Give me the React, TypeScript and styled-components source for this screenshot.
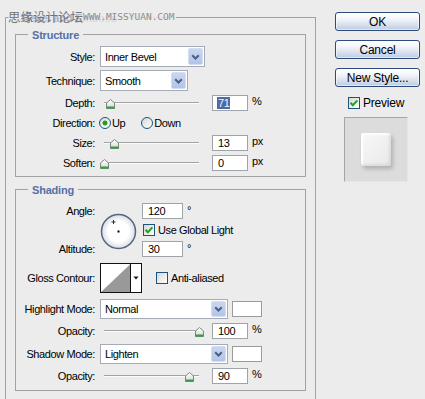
import React from "react";
import styled, { createGlobalStyle } from "styled-components";

const GlobalStyle = createGlobalStyle`
  html, body {
    margin: 0;
    padding: 0;
    background: #ececec;
  }
  body {
    font-family: "Liberation Sans", Arial, sans-serif;
    font-size: 11px;
    color: #000;
  }
`;

const Dialog = styled.div`
  position: relative;
  width: 425px;
  height: 399px;
  overflow: hidden;
  box-sizing: border-box;
  padding: 12px 5px 0 5px;
  display: flex;
  align-items: flex-start;
  background: #ececec;
  letter-spacing: -0.4px;
`;

const Group = styled.div<{ $mt?: number; $mx?: number }>`
  border: 1px solid #a2a2a2;
  margin: ${(p) => p.$mt ?? 0}px ${(p) => p.$mx ?? 0}px 0;
`;

const Outer = styled(Group)`
  width: 311px;
  box-sizing: border-box;
  padding-bottom: 40px;
`;

const Legend = styled.div`
  width: fit-content;
  margin: -7px 0 0 12px;
  padding: 0 4px;
  line-height: 14px;
  font-weight: bold;
  font-size: 11px;
  color: #5670a6;
  background: #ececec;
  letter-spacing: -0.2px;
`;

const Body = styled.div<{ $pt: number; $pb: number }>`
  display: flex;
  flex-direction: column;
  padding: ${(p) => p.$pt}px 0 ${(p) => p.$pb}px;
`;

const Row = styled.div<{ $h: number; $mt?: number }>`
  display: grid;
  grid-template-columns: 79px 1fr;
  column-gap: 5px;
  align-items: center;
  height: ${(p) => p.$h}px;
  margin-top: ${(p) => p.$mt ?? 0}px;
`;

const Label = styled.span`
  text-align: right;
  white-space: nowrap;
`;

const Controls = styled.div`
  display: flex;
  align-items: center;
  height: 100%;
`;

const Select = styled.div<{ $w: number }>`
  width: ${(p) => p.$w}px;
  height: 100%;
  box-sizing: border-box;
  border: 1px solid #a5acb5;
  background: #fff;
  display: flex;
  align-items: center;
  justify-content: space-between;
  padding-left: 4px;
`;

const DropButton = styled.span`
  width: 15px;
  height: calc(100% - 2px);
  margin-right: 1px;
  box-sizing: border-box;
  border: 1px solid #d3def3;
  border-radius: 2px;
  background: linear-gradient(#c9d6f0, #b3c4e6);
  display: flex;
  align-items: center;
  justify-content: center;
`;

const Swatch = styled.div`
  width: 30px;
  height: 16px;
  box-sizing: border-box;
  margin-left: 4px;
  border: 1px solid #9a9a9a;
  background: #fff;
`;

const SliderBox = styled.div`
  position: relative;
  width: 103px;
  height: 100%;
  margin-right: 9px;
  display: flex;
  align-items: center;
`;

const Track = styled.div`
  flex: 1;
  margin: 0 4px;
  height: 0;
  border-top: 1px solid #a3a3a3;
  border-bottom: 1px solid #fbfbfb;
`;

const ThumbIcon = styled.svg`
  position: absolute;
  top: 50%;
  margin-top: -4px;
  margin-left: -4.5px;
`;

const Field = styled.div<{ $w?: number }>`
  width: ${(p) => p.$w ?? 36}px;
  height: 16px;
  box-sizing: border-box;
  border: 1px solid #9fa4ab;
  background: #fff;
  padding-left: 5px;
  line-height: 14px;
  white-space: nowrap;
`;

const Selected = styled.span`
  background: #4f6aa5;
  color: #f4f4f4;
  padding: 0 1px;
  margin-left: -1px;
`;

const Unit = styled.span`
  align-self: flex-start;
  margin: 1px 0 0 4px;
  line-height: 12px;
`;

const RadioItem = styled.span<{ $ml?: number }>`
  display: inline-flex;
  align-items: center;
  gap: 1px;
  margin-left: ${(p) => p.$ml ?? -1}px;
`;

const RadioDot = styled.span<{ $on?: boolean }>`
  width: 12px;
  height: 12px;
  box-sizing: border-box;
  border-radius: 50%;
  border: 1px solid #1c5180;
  background: ${(p) =>
    p.$on
      ? "radial-gradient(circle, #21a121 0 2.2px, transparent 2.8px), linear-gradient(135deg, #d8d8d2, #fff)"
      : "linear-gradient(135deg, #d8d8d2, #fff)"};
`;

const CheckBox = styled.span<{ $ml?: number }>`
  width: 12px;
  height: 12px;
  flex: none;
  box-sizing: border-box;
  border: 1px solid #1c5180;
  background: linear-gradient(135deg, #d8d8d2, #fff);
  display: inline-flex;
  align-items: center;
  justify-content: center;
  margin-left: ${(p) => p.$ml ?? 0}px;
`;

const CheckLabel = styled.span`
  margin-left: 3px;
  white-space: nowrap;
`;

const AngleBlock = styled.div`
  display: grid;
  grid-template-columns: 79px 37px auto;
  grid-template-rows: 16px 22px 16px;
  column-gap: 5px;
  align-items: center;
`;

const AngleLabel = styled(Label)<{ $row: number }>`
  grid-column: 1;
  grid-row: ${(p) => p.$row};
`;

const Dial = styled.svg`
  grid-column: 2;
  grid-row: 1 / 4;
  align-self: center;
  margin-top: 2px;
`;

const AngleCell = styled.div<{ $row: number }>`
  grid-column: 3;
  grid-row: ${(p) => p.$row};
  display: flex;
  align-items: center;
  height: 100%;
`;

const Contour = styled.svg`
  display: block;
`;

const Side = styled.div`
  width: 85px;
  margin-left: 19px;
  display: flex;
  flex-direction: column;
  gap: 9px;
`;

const Button = styled.button`
  width: 85px;
  height: 19px;
  padding: 0;
  box-sizing: border-box;
  border: 1px solid #2d4a7c;
  border-radius: 3px;
  background: linear-gradient(#ffffff 0%, #f2f5fa 35%, #d3dcec 75%, #bccadf 100%);
  box-shadow: inset 0 0 0 1px rgba(255, 255, 255, 0.55);
  font-family: "Liberation Sans", Arial, sans-serif;
  font-size: 12px;
  letter-spacing: -0.2px;
  color: #000;
  line-height: 16px;
`;

const PreviewRow = styled.div`
  display: flex;
  align-items: center;
  margin: 1px 0 0 13px;
  height: 12px;
  font-size: 12px;
  letter-spacing: -0.2px;
`;

const PreviewBox = styled.div`
  width: 64px;
  height: 65px;
  margin: -1px 0 0 9px;
  box-sizing: border-box;
  border-top: 1px solid #a6a6a6;
  border-left: 1px solid #a6a6a6;
  border-right: 1px solid #e6e6e6;
  border-bottom: 1px solid #e6e6e6;
  background: #dcdcdc;
  display: flex;
  align-items: center;
  justify-content: center;
`;

const Bevel = styled.div`
  width: 30px;
  height: 33px;
  border-radius: 3px;
  background: linear-gradient(135deg, #f8f8f8, #e9e9e9);
  box-shadow: 2px 3px 4px rgba(0, 0, 0, 0.2), inset -2px -2px 3px rgba(0, 0, 0, 0.08),
    inset 2px 2px 2px #fff;
`;

const Watermark = styled.div`
  position: absolute;
  top: 8px;
  left: 8px;
  height: 17px;
  display: flex;
  align-items: center;
  letter-spacing: 0;
`;

const WaterCn = styled.span`
  font-family: "Noto Sans CJK SC", sans-serif;
  font-size: 12.5px;
  line-height: 17px;
  color: #737373;
  background: rgba(236, 236, 236, 0.55);
`;

const WaterEn = styled.span`
  font-family: "DejaVu Sans Mono", monospace;
  font-size: 9.5px;
  line-height: 17px;
  color: #8d8d8d;
  background: rgba(236, 236, 236, 0.85);
  padding-right: 1px;
`;

const Chevron = () => (
  <svg width="9" height="6" viewBox="0 0 9 6">
    <path d="M1.2 1.2 L4.5 4.5 L7.8 1.2" fill="none" stroke="#4a5f86" strokeWidth="2" />
  </svg>
);

const Tick = () => (
  <svg width="10" height="10" viewBox="0 0 10 10">
    <path d="M1.5 4.8 L3.8 7.2 L8.4 2.4" fill="none" stroke="#21a121" strokeWidth="2" />
  </svg>
);

const Dropdown = ({ w, text }: { w: number; text: string }) => (
  <Select $w={w}>
    <span>{text}</span>
    <DropButton>
      <Chevron />
    </DropButton>
  </Select>
);

const Slider = ({ pct }: { pct: number }) => (
  <SliderBox>
    <Track />
    <ThumbIcon width="9" height="10" viewBox="0 0 9 10" style={{ left: 4 + pct * 95 }}>
      <defs>
        <linearGradient id="tg" x1="0" y1="0" x2="0" y2="1">
          <stop offset="0" stopColor="#ffffff" />
          <stop offset="1" stopColor="#d4d8d4" />
        </linearGradient>
      </defs>
      <path d="M0.5 4 L4.5 0.5 L8.5 4 V9.5 H0.5 Z" fill="url(#tg)" stroke="#7d8a80" />
      <rect x="0.5" y="7.5" width="8" height="2" fill="#3b9a45" />
    </ThumbIcon>
  </SliderBox>
);

const SliderRow = ({ label, pct, value, unit, mt, sel }: { label: string; pct: number; value: string; unit: string; mt?: number; sel?: boolean }) => (
  <Row $h={17} $mt={mt}>
    <Label>{label}</Label>
    <Controls>
      <Slider pct={pct} />
      <Field>{sel ? <Selected>{value}</Selected> : value}</Field>
      <Unit>{unit}</Unit>
    </Controls>
  </Row>
);

export default function App() {
  return (
    <>
      <GlobalStyle />
      <Dialog>
        <Outer $mt={5}>
          <Legend>Bevel and Emboss</Legend>
          <Group $mt={9} $mx={9}>
            <Legend>Structure</Legend>
            <Body $pt={4} $pb={5}>
              <Row $h={21}>
                <Label>Style:</Label>
                <Controls>
                  <Dropdown w={105} text="Inner Bevel" />
                </Controls>
              </Row>
              <Row $h={21} $mt={3}>
                <Label>Technique:</Label>
                <Controls>
                  <Dropdown w={88} text="Smooth" />
                </Controls>
              </Row>
              <SliderRow label="Depth:" pct={0.071} value="71" unit="%" mt={3} sel />
              <Row $h={17} $mt={3}>
                <Label>Direction:</Label>
                <Controls>
                  <RadioItem>
                    <RadioDot $on />
                    <span>Up</span>
                  </RadioItem>
                  <RadioItem $ml={16}>
                    <RadioDot />
                    <span>Down</span>
                  </RadioItem>
                </Controls>
              </Row>
              <SliderRow label="Size:" pct={0.11} value="13" unit="px" mt={3} />
              <SliderRow label="Soften:" pct={0} value="0" unit="px" mt={3} />
            </Body>
          </Group>

          <Group $mt={12} $mx={9}>
            <Legend>Shading</Legend>
            <Body $pt={6} $pb={6}>
              <AngleBlock>
                <AngleLabel $row={1}>Angle:</AngleLabel>
                <AngleLabel $row={3}>Altitude:</AngleLabel>
                <Dial width="37" height="37" viewBox="0 0 37 37">
                  <defs>
                    <radialGradient id="dg" cx="0.5" cy="0.5" r="0.5">
                      <stop offset="0.6" stopColor="#ffffff" />
                      <stop offset="1" stopColor="#d7dde6" />
                    </radialGradient>
                  </defs>
                  <circle cx="18.5" cy="18.5" r="17" fill="url(#dg)" stroke="#56657a" strokeWidth="1.5" />
                  <path d="M13.5 7 V11 M11.5 9 H15.5" stroke="#333" strokeWidth="1" />
                  <rect x="17.5" y="17.5" width="2" height="2" fill="#000" />
                </Dial>
                <AngleCell $row={1}>
                  <Field $w={41}>120</Field>
                  <Unit>°</Unit>
                </AngleCell>
                <AngleCell $row={2}>
                  <CheckBox $ml={1}>
                    <Tick />
                  </CheckBox>
                  <CheckLabel>Use Global Light</CheckLabel>
                </AngleCell>
                <AngleCell $row={3}>
                  <Field $w={41}>30</Field>
                  <Unit>°</Unit>
                </AngleCell>
              </AngleBlock>

              <Row $h={30} $mt={6}>
                <Label>Gloss Contour:</Label>
                <Controls>
                  <Contour width="42" height="30" viewBox="0 0 42 30">
                    <rect x="0.5" y="0.5" width="41" height="29" fill="#fff" stroke="#111" />
                    <polygon points="1,29 30.5,1 30.5,29" fill="#999" />
                    <line x1="30.5" y1="0" x2="30.5" y2="30" stroke="#111" />
                    <polygon points="33.5,13.5 38.5,13.5 36,16.5" fill="#111" />
                  </Contour>
                  <CheckBox $ml={14} />
                  <CheckLabel>Anti-aliased</CheckLabel>
                </Controls>
              </Row>

              <Row $h={20} $mt={6}>
                <Label>Highlight Mode:</Label>
                <Controls>
                  <Dropdown w={128} text="Normal" />
                  <Swatch />
                </Controls>
              </Row>
              <SliderRow label="Opacity:" pct={1} value="100" unit="%" mt={3} />
              <Row $h={20} $mt={5}>
                <Label>Shadow Mode:</Label>
                <Controls>
                  <Dropdown w={128} text="Lighten" />
                  <Swatch />
                </Controls>
              </Row>
              <SliderRow label="Opacity:" pct={0.9} value="90" unit="%" mt={3} />
            </Body>
          </Group>
        </Outer>

        <Side>
          <Button>OK</Button>
          <Button>Cancel</Button>
          <Button>New Style...</Button>
          <PreviewRow>
            <CheckBox>
              <Tick />
            </CheckBox>
            <CheckLabel>Preview</CheckLabel>
          </PreviewRow>
          <PreviewBox>
            <Bevel />
          </PreviewBox>
        </Side>

        <Watermark>
          <WaterCn>思缘设计论坛</WaterCn>
          <WaterEn>WWW.MISSYUAN.COM</WaterEn>
        </Watermark>
      </Dialog>
    </>
  );
}
